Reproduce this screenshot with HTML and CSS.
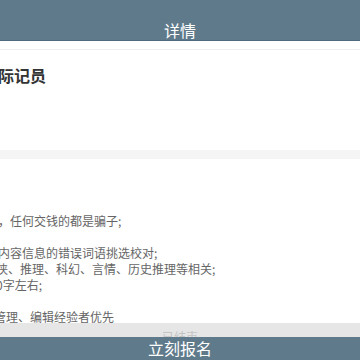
FILE: index.html
```html
<!DOCTYPE html>
<html lang="zh">
<head>
<meta charset="utf-8">
<link rel="stylesheet" href="styles.css">
</head>
<body>
<header class="topbar"><span class="topbar-title">详情</span></header>
<div class="strip"></div>
<section class="job-head">
  <h1 class="job-title">际记员</h1>
</section>
<div class="band"></div>
<section class="job-desc">
  <p class="line l1">本职位免费，任何交钱的都是骗子;</p>
  <p class="line blank">&nbsp;</p>
  <p class="line l2">内容信息的错误词语挑选校对;</p>
  <p class="line l3">侠、推理、科幻、言情、历史推理等相关;</p>
  <p class="line l4">0字左右;</p>
  <p class="line blank">&nbsp;</p>
  <p class="line l5">管理、编辑经验者优先</p>
</section>
<footer class="bottom">
  <div class="status">已结束</div>
  <button class="apply">立刻报名</button>
</footer>
</body>
</html>
```
FILE: styles.css
```css
* { box-sizing: border-box; margin: 0; padding: 0; }
html, body { width: 360px; height: 360px; overflow: hidden; background: #fff; }
body { font-family: "Noto Sans CJK SC", "Noto Sans", sans-serif; color: #333; }

.topbar {
  height: 41px;
  background: #5f7b8b;
  border-bottom: 1px solid #4f6a7a;
  display: flex;
  justify-content: center;
  padding-top: 20px;
}
.topbar-title { color: #fff; font-size: 16px; line-height: 20px; }

.strip { height: 9px; border-bottom: 1px solid #efefef; }

.job-head { height: 100px; padding-top: 15px; overflow: hidden; }
.job-title {
  font-size: 16px; font-weight: bold; line-height: 20px; color: #333;
  margin-left: -2px;
}

.band { height: 9px; background: #f5f5f5; }

.job-desc { padding-top: 54px; overflow: hidden; }
.line { font-size: 12px; line-height: 16px; color: #666; white-space: nowrap; }
.l1 { margin-left: -62px; }
.l2 { margin-left: -2px; }
.l3 { margin-left: -4px; }
.l4 { margin-left: -4px; }
.l5 { margin-left: -6px; }

.bottom { position: fixed; left: 0; right: 0; bottom: 0; }
.status {
  height: 14px; background: #e6e6e6; color: #c4c4c4;
  font-size: 12px; line-height: 28px; text-align: center; overflow: hidden;
}
.apply {
  display: block; width: 100%; height: 23px; border: 0;
  background: #5f7b8b; color: #fff;
  font-family: inherit; font-size: 16px; line-height: 23px;
}
```
